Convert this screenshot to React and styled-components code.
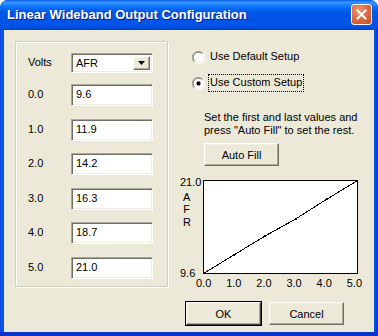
import React from 'react';
import styled, {createGlobalStyle} from 'styled-components';

const GlobalStyle = createGlobalStyle`
  html, body {
    margin: 0;
    padding: 0;
    background: #ffffff;
  }
  body {
    font-family: "Liberation Sans", Arial, sans-serif;
    font-size: 11px;
    color: #000;
  }
`;

const Window = styled.div`
  width: 378px;
  height: 336px;
  display: flex;
  flex-direction: column;
  box-sizing: border-box;
  border-radius: 8px 8px 0 0;
  overflow: hidden;
  background: #0054e3;
`;

const TitleBar = styled.div`
  height: 30px;
  flex: none;
  display: flex;
  align-items: center;
  padding: 0 6px 0 7px;
  box-sizing: border-box;
  background: linear-gradient(
    #0058ee 0,
    #3a93ff 2px,
    #2a8bff 4px,
    #1278fc 6px,
    #0466f2 9px,
    #0058e6 12px,
    #0054e3 18px,
    #0056e8 25px,
    #004bdc 28px,
    #003fd2 30px
  );
`;

const Title = styled.div`
  flex: 1;
  color: #fff;
  font-family: "Liberation Sans", Arial, sans-serif;
  font-weight: bold;
  font-size: 13px;
  text-shadow: 1px 1px 0 #0a1e8a;
  padding-bottom: 1px;
`;

const CloseButton = styled.div`
  width: 21px;
  height: 21px;
  box-sizing: border-box;
  border: 1px solid #fff;
  border-radius: 3px;
  background: radial-gradient(circle at 35% 30%, #ef9a78 0, #e26a42 45%, #cc4a20 100%);
  display: flex;
  align-items: center;
  justify-content: center;
  margin-bottom: 1px;
`;

const Frame = styled.div`
  flex: 1;
  display: flex;
  padding: 0 4px 4px;
  background: linear-gradient(90deg, #0831d9 0, #1660ea 1px, #0855dd 2px, #0054e3 3px, #0054e3 calc(100% - 3px), #0846d8 calc(100% - 2px), #0831d9 100%);
  box-shadow: inset 0 -4px 0 #0a33c8, inset 0 -1px 0 #001ea0;
`;

const Client = styled.div`
  flex: 1;
  display: flex;
  align-items: flex-start;
  background: #ece9d8;
  padding: 11px 0 0 11px;
`;

const GroupBox = styled.div`
  width: 153px;
  height: 246px;
  box-sizing: border-box;
  border: 1px solid #d0d0bf;
  box-shadow: inset 1px 1px 0 #fff, 1px 1px 0 #fff;
  padding: 11px 0 0 12px;
  display: flex;
  flex-direction: column;
  gap: 12.6px;
`;

const FieldRow = styled.div`
  display: flex;
  align-items: center;
  margin-bottom: ${p => p.$after || 0}px;
`;

const FieldLabel = styled.div`
  width: 43px;
  padding-bottom: 2px;
`;

const sunken = `
  box-sizing: border-box;
  background: #fff;
  border: 1px solid;
  border-color: #aca899 #fff #fff #aca899;
  box-shadow: inset 1px 1px 0 #716f64, inset -1px -1px 0 #f1efe2;
`;

const TextBox = styled.div`
  ${sunken}
  width: 82px;
  height: 22px;
  padding: 3px 0 0 4px;
  line-height: 13px;
`;

const Select = styled.div`
  ${sunken}
  width: 82px;
  height: 20px;
  display: flex;
  align-items: stretch;
  padding: 2px;
`;

const SelectText = styled.div`
  flex: 1;
  padding: 1px 0 0 2px;
  line-height: 13px;
`;

const raised = `
  box-sizing: border-box;
  background: #ece9d8;
  border: 1px solid;
  border-color: #fff #716f64 #716f64 #fff;
  box-shadow: inset -1px -1px 0 #aca899, inset 1px 1px 0 #f1efe2;
`;

const DropButton = styled.div`
  ${raised}
  width: 17px;
  display: flex;
  align-items: center;
  justify-content: center;
`;

const RightColumn = styled.div`
  margin-left: 12px;
  width: 182px;
  display: flex;
  flex-direction: column;
`;

const RadioRow = styled.div`
  height: 16px;
  display: flex;
  align-items: center;
  padding-left: 12px;
  margin-top: ${p => p.$top}px;
`;

const RadioLabel = styled.span`
  margin-left: 3px;
  padding: 1px 1px 2px 1px;
  line-height: 13px;
  border: 1px dotted ${p => (p.$focus ? '#000' : 'transparent')};
`;

const Hint = styled.div`
  margin-top: 19.5px;
  padding-left: 24px;
  line-height: 13px;
  white-space: nowrap;
`;

const PushButton = styled.div`
  ${raised}
  width: 75px;
  height: 23px;
  display: flex;
  align-items: center;
  justify-content: center;
  outline: ${p => (p.$default ? '1px solid #000' : 'none')};
  outline-offset: 0;
  ${p => p.$default && `
    border-color: #fff #404040 #404040 #fff;
  `}
`;

const AutoFill = styled(PushButton)`
  margin: 6.5px 0 0 24px;
`;

const Chart = styled.div`
  margin-top: 14px;
  display: grid;
  grid-template-columns: 23px 155px;
  grid-template-rows: 94px auto;
`;

const YAxis = styled.div`
  display: flex;
  flex-direction: column;
  line-height: 13px;
`;

const YMax = styled.div`
  margin-top: -4px;
  text-align: right;
  padding-right: 2px;
`;

const YTitle = styled.div`
  margin-top: 1.5px;
  padding-left: 3px;
  width: 7px;
  text-align: center;
  line-height: 12.5px;
`;

const YMin = styled.div`
  margin-top: auto;
  margin-bottom: -6px;
  text-align: right;
  padding-right: 9px;
`;

const XAxis = styled.div`
  grid-column: 2;
  margin: 3px 0 0 -7px;
  width: 166px;
  display: flex;
  justify-content: space-between;
  line-height: 13px;
`;

const DialogButtons = styled.div`
  margin: 12px 0 0 6px;
  display: flex;
  gap: 8px;
`;

const volts = ['0.0', '1.0', '2.0', '3.0', '4.0', '5.0'];
const afr = [9.6, 11.9, 14.2, 16.3, 18.7, 21.0];

function Radio({checked}) {
  return (
    <svg width="13" height="13" viewBox="0 0 13 13">
      <path d="M11 2.5 A6 6 0 0 0 1.6 10.6" fill="none" stroke="#aca899" strokeWidth="1" />
      <circle cx="6.5" cy="6.5" r="5.5" fill="#fff" />
      <path d="M10.3 2.7 A5 5 0 0 0 2.7 10.3" fill="none" stroke="#716f64" strokeWidth="1" />
      <path d="M2.3 11 A6 6 0 0 0 11 2.3" fill="none" stroke="#fff" strokeWidth="1" />
      <path d="M2.7 10.3 A5 5 0 0 0 10.3 2.7" fill="none" stroke="#f1efe2" strokeWidth="1" />
      {checked && <rect x="4.5" y="4.5" width="4" height="4" rx="1.4" fill="#000" />}
    </svg>
  );
}

function Plot() {
  const w = 154;
  const h = 93;
  const pts = afr.map((v, i) => [0.5 + (i * w) / 5, 0.5 + h - ((v - 9.6) / 11.4) * h]);
  return (
    <svg width="155" height="94" viewBox="0 0 155 94" shapeRendering="crispEdges">
      <rect x="0.5" y="0.5" width={w} height={h} fill="#fff" stroke="#000" />
      <polyline points={pts.map(p => p.join(',')).join(' ')} fill="none" stroke="#000" strokeWidth="1" />
      {pts.map(([x, y], i) => (
        <rect key={i} x={x - 1} y={y - 1} width="2" height="2" fill="#000" />
      ))}
    </svg>
  );
}

export default function App() {
  return (
    <>
      <GlobalStyle />
      <Window>
        <TitleBar>
          <Title>Linear Wideband Output Configuration</Title>
          <CloseButton>
            <svg width="11" height="11" viewBox="0 0 11 11">
              <path d="M1.5 1.5 L9.5 9.5 M9.5 1.5 L1.5 9.5" stroke="#fff" strokeWidth="2" strokeLinecap="square" />
            </svg>
          </CloseButton>
        </TitleBar>
        <Frame>
          <Client>
            <GroupBox>
              <FieldRow $after={-1.6}>
                <FieldLabel>Volts</FieldLabel>
                <Select>
                  <SelectText>AFR</SelectText>
                  <DropButton>
                    <svg width="7" height="4" viewBox="0 0 7 4">
                      <path d="M0 0 H7 L3.5 4 Z" fill="#000" />
                    </svg>
                  </DropButton>
                </Select>
              </FieldRow>
              {volts.map((v, i) => (
                <FieldRow key={v}>
                  <FieldLabel>{v}</FieldLabel>
                  <TextBox>{afr[i].toFixed(1)}</TextBox>
                </FieldRow>
              ))}
            </GroupBox>
            <RightColumn>
              <RadioRow $top={8}>
                <Radio />
                <RadioLabel>Use Default Setup</RadioLabel>
              </RadioRow>
              <RadioRow $top={10}>
                <Radio checked />
                <RadioLabel $focus>Use Custom Setup</RadioLabel>
              </RadioRow>
              <Hint>
                Set the first and last values and
                <br />
                press "Auto Fill" to set the rest.
              </Hint>
              <AutoFill>Auto Fill</AutoFill>
              <Chart>
                <YAxis>
                  <YMax>21.0</YMax>
                  <YTitle>A<br />F<br />R</YTitle>
                  <YMin>9.6</YMin>
                </YAxis>
                <Plot />
                <XAxis>
                  {volts.map(v => (
                    <span key={v}>{v}</span>
                  ))}
                </XAxis>
              </Chart>
              <DialogButtons>
                <PushButton $default>OK</PushButton>
                <PushButton>Cancel</PushButton>
              </DialogButtons>
            </RightColumn>
          </Client>
        </Frame>
      </Window>
    </>
  );
}
